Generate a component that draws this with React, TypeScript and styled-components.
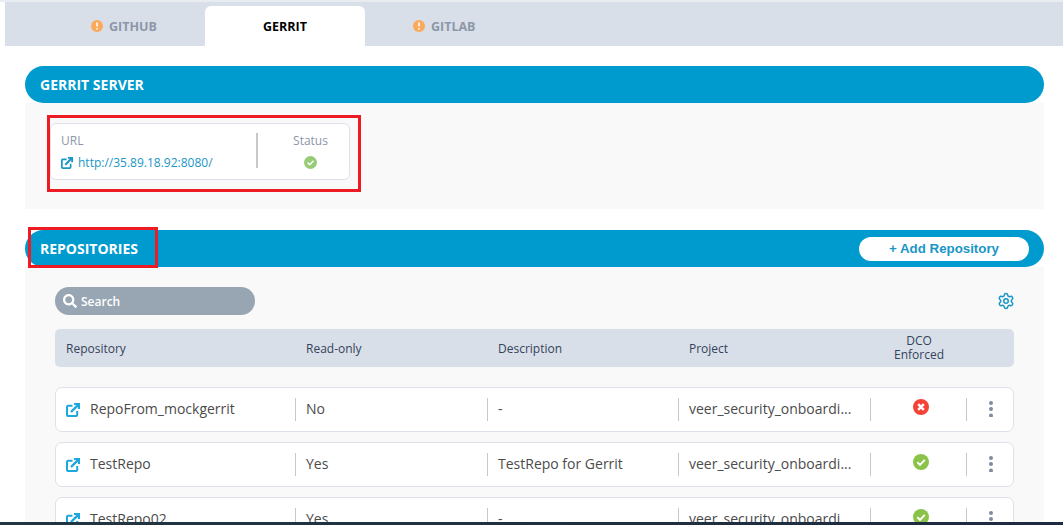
import React from "react";
import styled, { createGlobalStyle } from "styled-components";
import { FaSearch } from "react-icons/fa";
import { Settings } from "lucide-react";

const Global = createGlobalStyle`
  html, body { margin: 0; padding: 0; background: #fff; height: 100%; overflow: hidden; }
  #root { height: 100%; }
  * { box-sizing: border-box; }
  body { font-family: "Open Sans", "Liberation Sans", sans-serif; }
`;

const Page = styled.div`
  position: relative;
  width: 1063px;
  height: 525px;
  overflow: hidden;
  background: #fff;
`;
const TopStrip = styled.div`
  height: 2px;
  background: #e8ebef;
`;
const TabBar = styled.nav`
  display: grid;
  grid-template-columns: 200px 160px 200px 1fr;
  height: 44px;
  margin-left: 5px;
  background: #d9dfe8;
  align-items: end;
`;
const Tab = styled.div<{ $inset: number }>`
  height: 40px;
  display: flex;
  align-items: center;
  gap: 6px;
  font-size: 12.5px;
  font-weight: 700;
  color: #8c97a9;
  padding-left: ${(p) => p.$inset}px;
`;
const ActiveTab = styled(Tab)`
  color: #000;
  background: #fff;
  border-radius: 6px 6px 0 0;
`;
const Content = styled.main`
  padding: 20px 19px 0 25px;
`;
const Section = styled.section`
  margin-bottom: 21px;
`;
const SectionHead = styled.header`
  height: 37px;
  border-radius: 18.5px;
  background: #009bce;
  color: #fff;
  font-size: 14px;
  font-weight: 700;
  display: flex;
  align-items: center;
  justify-content: space-between;
  padding: 0 15px;
`;
const Panel = styled.div`
  background: #f9f9f9;
`;
const ServerPanel = styled(Panel)`
  height: 106px;
  padding: 20px 25px;
`;
const ServerCard = styled.div`
  width: 300px;
  height: 57px;
  background: #fff;
  border: 1px solid #dde2ea;
  border-radius: 6px;
  display: grid;
  grid-template-columns: 207px 1fr;
  align-items: start;
  padding-top: 9px;
`;
const UrlCell = styled.div`
  height: 35px;
  padding-left: 10px;
  border-right: 2px solid #c8c8c8;
  display: flex;
  flex-direction: column;
  justify-content: space-between;
`;
const StatusCell = styled.div`
  height: 35px;
  padding-left: 14px;
  display: flex;
  flex-direction: column;
  justify-content: space-between;
  align-items: center;
`;
const Label = styled.span`
  font-size: 12px;
  line-height: 14px;
  margin-top: 1px;
  color: #8c97a9;
`;
const UrlLink = styled.span`
  display: flex;
  align-items: center;
  gap: 5px;
  font-size: 12px;
  line-height: 16px;
  margin-bottom: -3px;
  color: #1a96c6;
`;
const StatusIcon = styled.span`
  display: flex;
  margin-bottom: -1px;
`;
const AddButton = styled.button`
  width: 170px;
  height: 24px;
  border: 0;
  border-radius: 12px;
  background: #fff;
  color: #1a96c6;
  font-family: "Liberation Sans", Arial, sans-serif;
  font-size: 13.3px;
  font-weight: 700;
  padding: 0;
`;
const RepoPanel = styled(Panel)`
  padding: 20px 30px 0;
  height: 260px;
`;
const Toolbar = styled.div`
  display: flex;
  align-items: center;
  justify-content: space-between;
  height: 28px;
  margin-bottom: 14px;
`;
const SearchBox = styled.div`
  width: 200px;
  height: 28px;
  border-radius: 14px;
  background: #98a5b3;
  color: #fff;
  display: flex;
  align-items: center;
  gap: 4px;
  padding-left: 8px;
  font-size: 12px;
  font-weight: 600;
`;
const GearWrap = styled.span`
  color: #1a96c6;
  display: flex;
  margin-right: -1px;
`;
const gridCols = "240px 192px 191px 192px 96px 48px";
const TableHead = styled.div`
  display: grid;
  grid-template-columns: ${gridCols};
  height: 38px;
  align-items: center;
  background: #d9dfe8;
  border-radius: 5px;
  margin-bottom: 20px;
  font-size: 12px;
  color: #33435c;
`;
const HeadCell = styled.div`
  padding: 1px 0 0 11px;
  line-height: 14px;
`;
const CenterHeadCell = styled.div`
  display: flex;
  flex-direction: column;
  align-items: center;
  padding-left: 2px;
  line-height: 14px;
`;
const Row = styled.div`
  display: grid;
  grid-template-columns: ${gridCols};
  height: 45px;
  margin-bottom: 10px;
  align-items: center;
  background: #fff;
  border: 1px solid #dde2ea;
  border-radius: 7px;
  font-size: 14px;
  color: #4b4b4b;
`;
const Cell = styled.div`
  height: 23px;
  padding-left: 10px;
  margin-top: -1px;
  display: flex;
  align-items: center;
  gap: 10px;
  line-height: 20px;
  white-space: nowrap;
  border-right: 1px solid #c8c8c8;
`;
const RowLink = styled.span`
  display: flex;
  margin-top: 1px;
`;
const IconCell = styled.div`
  height: 23px;
  display: flex;
  align-items: flex-start;
  justify-content: center;
  margin-top: -1px;
  padding-left: 5px;
  padding-top: 1px;
  border-right: 1px solid #c8c8c8;
`;
const MenuCell = styled.div`
  height: 23px;
  display: flex;
  align-items: center;
  justify-content: center;
  margin-top: -1px;
`;
const RedBox = styled.div`
  position: absolute;
  border: 3px solid #ed1c24;
`;
const ServerMark = styled(RedBox)`
  left: 47px;
  top: 115px;
  width: 314px;
  height: 77px;
`;
const RepoMark = styled(RedBox)`
  left: 28px;
  top: 227px;
  width: 130px;
  height: 41px;
`;
const BottomBar = styled.div`
  position: absolute;
  left: 0;
  right: 0;
  bottom: 0;
  height: 3px;
  background: linear-gradient(90deg, #223540, #1e2a40);
`;

const LinkIcon = ({ size = 13, color = "#1a96c6" }: { size?: number; color?: string }) => (
  <svg width={size} height={size} viewBox="0 0 14 14" fill="none" style={{ flex: "none" }}>
    <path d="M6.5 2.8H2A1 1 0 0 0 1 3.8v8.2a1 1 0 0 0 1 1h8.2a1 1 0 0 0 1-1V8" stroke={color} strokeWidth="2" />
    <path d="M5 9 12.2 1.8" stroke={color} strokeWidth="2.4" />
    <path d="M8 1h5v5" stroke={color} strokeWidth="2.2" fill="none" />
  </svg>
);
const OkIcon = ({ size = 16, color = "#8bc34a" }: { size?: number; color?: string }) => (
  <svg width={size} height={size} viewBox="0 0 16 16">
    <circle cx="8" cy="8" r="8" fill={color} />
    <path d="M4.3 8.2 7 10.8l4.8-5" fill="none" stroke="#fff" strokeWidth="1.9" />
  </svg>
);
const BadIcon = () => (
  <svg width={16} height={16} viewBox="0 0 16 16">
    <circle cx="8" cy="8" r="8" fill="#f44336" />
    <path d="M5.2 5.2l5.6 5.6M10.8 5.2l-5.6 5.6" fill="none" stroke="#fff" strokeWidth="2.4" />
  </svg>
);
const WarnIcon = () => (
  <svg width={12} height={12} viewBox="0 0 12 12">
    <circle cx="6" cy="6" r="6" fill="#fba95b" />
    <path d="M6 2.6v4" stroke="#fff" strokeWidth="1.6" />
    <circle cx="6" cy="8.8" r="0.9" fill="#fff" />
  </svg>
);
const Dots = () => (
  <svg width={6} height={16} viewBox="0 0 6 16">
    <circle cx="3" cy="2" r="2" fill="#7f8ba0" />
    <circle cx="3" cy="8" r="2" fill="#7f8ba0" />
    <circle cx="3" cy="14.5" r="2" fill="#7f8ba0" />
  </svg>
);

const repos = [
  { name: "RepoFrom_mockgerrit", ro: "No", desc: "-", ok: false },
  { name: "TestRepo", ro: "Yes", desc: "TestRepo for Gerrit", ok: true },
  { name: "TestRepo02", ro: "Yes", desc: "-", ok: true },
];

export default function App() {
  return (
    <Page>
      <Global />
      <TopStrip />
      <TabBar>
        <Tab $inset={86}><WarnIcon />GITHUB</Tab>
        <ActiveTab $inset={58}>GERRIT</ActiveTab>
        <Tab $inset={48}><WarnIcon />GITLAB</Tab>
      </TabBar>
      <Content>
        <Section>
          <SectionHead>GERRIT SERVER</SectionHead>
          <ServerPanel>
            <ServerCard>
              <UrlCell>
                <Label>URL</Label>
                <UrlLink><LinkIcon size={12} />http://35.89.18.92:8080/</UrlLink>
              </UrlCell>
              <StatusCell>
                <Label>Status</Label>
                <StatusIcon><OkIcon size={13} color="#97cc76" /></StatusIcon>
              </StatusCell>
            </ServerCard>
          </ServerPanel>
        </Section>
        <Section>
          <SectionHead>
            REPOSITORIES
            <AddButton>+ Add Repository</AddButton>
          </SectionHead>
          <RepoPanel>
            <Toolbar>
              <SearchBox><FaSearch size={14} />Search</SearchBox>
              <GearWrap><Settings size={18} strokeWidth={2} /></GearWrap>
            </Toolbar>
            <TableHead>
              <HeadCell>Repository</HeadCell>
              <HeadCell>Read-only</HeadCell>
              <HeadCell>Description</HeadCell>
              <HeadCell>Project</HeadCell>
              <CenterHeadCell><span>DCO</span><span>Enforced</span></CenterHeadCell>
              <HeadCell />
            </TableHead>
            {repos.map((r) => (
              <Row key={r.name}>
                <Cell><RowLink><LinkIcon size={14} color="#1ea7dc" /></RowLink><span>{r.name}</span></Cell>
                <Cell><span>{r.ro}</span></Cell>
                <Cell><span>{r.desc}</span></Cell>
                <Cell><span>veer_security_onboardi...</span></Cell>
                <IconCell>{r.ok ? <OkIcon /> : <BadIcon />}</IconCell>
                <MenuCell><Dots /></MenuCell>
              </Row>
            ))}
          </RepoPanel>
        </Section>
      </Content>
      <ServerMark />
      <RepoMark />
      <BottomBar />
    </Page>
  );
}
